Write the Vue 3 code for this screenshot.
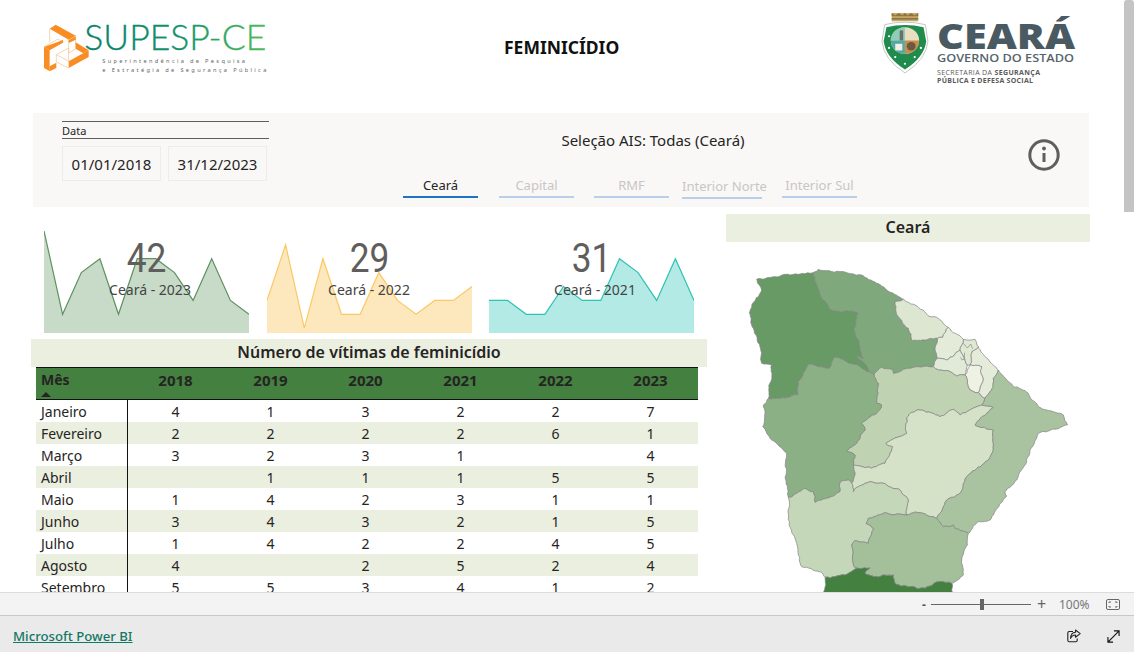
<script setup>
const years = [2018, 2019, 2020, 2021, 2022, 2023]

const rows = [
  ['Janeiro', 4, 1, 3, 2, 2, 7],
  ['Fevereiro', 2, 2, 2, 2, 6, 1],
  ['Março', 3, 2, 3, 1, '', 4],
  ['Abril', '', 1, 1, 1, 5, 5],
  ['Maio', 1, 4, 2, 3, 1, 1],
  ['Junho', 3, 4, 3, 2, 1, 5],
  ['Julho', 1, 4, 2, 2, 4, 5],
  ['Agosto', 4, '', 2, 5, 2, 4],
  ['Setembro', 5, 5, 3, 4, 1, 2]
]

const tabs = [
  { label: 'Ceará', active: true },
  { label: 'Capital' },
  { label: 'RMF' },
  { label: 'Interior Norte', low: true },
  { label: 'Interior Sul' }
]

// y = base - 13.9 por vítima, igual para os três gráficos
const toPoints = (values) => values.map((v, i) => `${(i * 205 / 11).toFixed(1)},${(98.2 - v * 13.9).toFixed(1)}`).join(' ')

const cards = [
  { total: 42, label: 'Ceará - 2023', line: '#5f9260', area: '#c8dac8', values: [7, 1, 4, 5, 1, 5, 5, 4, 2, 5, 2, 1] },
  { total: 29, label: 'Ceará - 2022', line: '#fbc864', area: '#fde8bd', values: [2, 6, 0, 5, 1, 1, 4, 2, 1, 2, 2, 3] },
  { total: 31, label: 'Ceará - 2021', line: '#2fc2b2', area: '#b3eae5', values: [2, 2, 1, 1, 3, 2, 2, 5, 4, 2, 5, 2] }
].map(c => ({
  ...c,
  linePoints: toPoints(c.values),
  areaPoints: `0,103 ${toPoints(c.values)} 205,103`
}))

// contorno irregular: cada aresta é subdividida de forma determinística,
// assim duas regiões vizinhas compartilham a mesma fronteira
const noise = (x, y) => {
  const s = Math.sin(x * 12.9898 + y * 78.233) * 43758.5453
  return s - Math.floor(s) - 0.5
}

const subdivide = (a, b) => {
  const dx = b[0] - a[0]
  const dy = b[1] - a[1]
  const len = Math.hypot(dx, dy)
  if (len < 9) return [a]
  const amp = noise(a[0] + b[0], a[1] + b[1]) * 0.28 * Math.min(len, 22) / len
  const mid = [(a[0] + b[0]) / 2 - dy * amp, (a[1] + b[1]) / 2 + dx * amp]
  return [...subdivide(a, mid), ...subdivide(mid, b)]
}

const edge = (a, b) => {
  const swap = a[0] > b[0] || (a[0] === b[0] && a[1] > b[1])
  if (!swap) return subdivide(a, b)
  const pts = [...subdivide(b, a), a]
  pts.reverse()
  return pts.slice(0, -1)
}

const toPath = (pts) => {
  let out = []
  pts.forEach((p, i) => { out = out.concat(edge(p, pts[(i + 1) % pts.length])) })
  return 'M' + out.map(p => `${p[0].toFixed(1)} ${p[1].toFixed(1)}`).join('L') + 'Z'
}

const regions = [
  ['#689a65', [[80,88],[180,75],[250,68],[268,125],[300,178],[385,188],[372,238],[390,290],[400,325],[380,315],[418,365],[360,340],[315,322],[298,355],[235,342],[205,395],[203,435],[115,445],[125,345],[95,340],[90,290],[70,235],[58,188],[95,120]]],
  ['#7fa97c', [[250,68],[265,58],[330,65],[395,75],[440,100],[520,148],[495,155],[498,185],[535,235],[548,272],[622,265],[615,295],[622,325],[610,350],[540,355],[490,370],[485,358],[455,352],[432,372],[418,365],[380,315],[400,325],[390,290],[372,238],[385,188],[300,178],[268,125]]],
  ['#dde6d0', [[520,148],[555,165],[600,200],[625,205],[655,232],[638,262],[622,265],[548,272],[535,235],[498,185],[495,155]]],
  ['#e4ecd9', [[655,232],[700,268],[690,300],[650,330],[622,325],[615,295],[622,265],[638,262]]],
  ['#e4ecd9', [[745,290],[805,360],[790,385],[785,420],[765,445],[745,428],[758,395],[755,350],[720,345],[725,305]]],
  ['#e1ead6', [[622,325],[650,330],[690,300],[700,318],[712,345],[705,375],[680,378],[660,365],[625,360],[610,350]]],
  ['#eef2e5', [[720,345],[755,350],[758,395],[745,428],[720,420],[705,375]]],
  ['#dfe8d3', [[700,268],[735,268],[745,290],[725,305],[720,345],[712,345],[700,318],[690,300]]],
  ['#bfd3b2', [[432,372],[455,352],[485,358],[490,370],[540,355],[610,350],[625,360],[660,365],[680,378],[705,375],[720,420],[745,428],[765,445],[755,465],[690,495],[670,478],[630,500],[575,480],[540,490],[530,505],[530,550],[468,580],[488,590],[465,640],[425,655],[370,645],[375,615],[350,603],[380,580],[405,540],[395,520],[440,490],[455,465],[440,460],[445,400]]],
  ['#8bb085', [[115,445],[203,435],[205,395],[235,342],[298,355],[315,322],[360,340],[418,365],[432,372],[445,400],[440,460],[455,465],[440,490],[395,520],[405,540],[380,580],[350,603],[375,615],[370,645],[375,675],[365,700],[355,690],[332,695],[330,725],[290,745],[255,757],[250,725],[225,715],[175,742],[168,700],[170,610],[125,570],[98,530],[105,490],[100,465]]],
  ['#d5e2c8', [[530,505],[540,490],[575,480],[630,500],[670,478],[690,495],[755,465],[790,472],[735,525],[790,540],[790,600],[775,630],[715,675],[690,730],[650,750],[620,805],[610,800],[570,788],[530,795],[535,750],[510,720],[470,705],[420,695],[385,710],[370,725],[365,700],[375,675],[370,645],[425,655],[465,640],[488,590],[468,580],[530,550]]],
  ['#a9c3a0', [[805,360],[850,410],[895,430],[925,470],[950,480],[1000,495],[1012,525],[925,550],[890,635],[860,690],[825,725],[830,738],[780,810],[745,815],[715,850],[675,835],[670,825],[640,830],[620,805],[650,750],[690,730],[715,675],[775,630],[790,600],[790,540],[735,525],[790,472],[755,465],[765,445],[785,420],[790,385]]],
  ['#c5d7b9', [[175,742],[225,715],[250,725],[255,757],[290,745],[330,725],[332,695],[355,690],[365,700],[370,725],[385,710],[420,695],[470,705],[510,720],[535,750],[530,795],[460,790],[415,805],[408,820],[430,835],[415,880],[375,872],[365,885],[372,950],[385,955],[345,975],[285,982],[270,965],[215,950],[200,880],[185,840],[175,805]]],
  ['#a3c09a', [[415,805],[460,790],[530,795],[570,788],[610,800],[620,805],[640,830],[670,825],[675,835],[715,850],[712,885],[695,930],[700,975],[665,1000],[625,995],[585,1015],[535,1010],[495,1000],[490,975],[440,980],[405,970],[385,955],[372,950],[365,885],[375,872],[415,880],[430,835],[408,820]]],
  ['#44803f', [[385,955],[420,953],[405,970],[440,980],[490,975],[495,1000],[535,1010],[585,1015],[625,995],[665,1000],[670,1040],[283,1040],[285,982],[345,975]]]
].map(([fill, pts]) => ({ fill, d: toPath(pts) }))
</script>

<template>
  <div class="page">
    <div class="viewer">
      <div class="report">
        <header class="top">
          <svg class="logo-supesp" viewBox="130 70 690 150">
            <defs>
              <linearGradient id="supespGrad" gradientUnits="userSpaceOnUse" x1="255" y1="0" x2="800" y2="0">
                <stop offset="0" stop-color="#0b7f6c" />
                <stop offset="0.5" stop-color="#12906a" />
                <stop offset="1" stop-color="#4fbb5c" />
              </linearGradient>
            </defs>
            <g fill="none" stroke="#f9c99a" stroke-width="2.4">
              <path d="M133 142l42-24 17 10" />
              <path d="M207 120l21-12v40l-21 12zM170 165l37-20v40l-37-20zM170 165v22l37 18M150 87v40" />
            </g>
            <g fill="#f98d23">
              <path d="M150 87l18-12 60 33-21 12z" />
              <path d="M133 142l17 10v63l-17-10z" />
              <path d="M150 152l40-23v-8l-57 21z" />
              <path d="M207 185l60-33v20l-60 33z" />
              <path d="M228 128l39 24-16 9-23-14z" />
              <path d="M150 200l20-11v16l-20 10z" />
              <path d="M207 122l21-12v10l-21 10z" />
            </g>
            <text class="supesp-name" x="254" y="152" textLength="546" lengthAdjust="spacingAndGlyphs" fill="url(#supespGrad)" stroke="url(#supespGrad)">SUPESP-CE</text>
            <text class="supesp-sub" x="308" y="190" textLength="428">Superintendência de Pesquisa</text>
            <text class="supesp-sub" x="308" y="216" textLength="492">e Estratégia de Segurança Pública</text>
          </svg>
          <h1 class="page-title">FEMINICÍDIO</h1>
          <svg class="logo-ceara" viewBox="0 0 200 78">
            <g transform="translate(0.3,-3.2) scale(0.885,0.833)">
              <path d="M14 5h30v10H14z" fill="#c9a866" />
              <path d="M14 5l4 3 4-3 4 3 3-3 3 3 4-3 4 3 4-3v4H14z" fill="#8d7443" />
              <path d="M14 11h30v2H14z" fill="#8d7443" />
              <path d="M6 19q23-6 46 0l3 20q-2 22-26 38Q5 61 3 39z" fill="#fff" stroke="#b9c0bb" stroke-width="1" />
              <path d="M8 22q21-5 42 0l3 17q-2 19-24 34Q7 58 5 39z" fill="#1f8b4c" />
              <circle cx="29" cy="38" r="16" fill="#e7dfc0" />
              <path d="M13 38a16 16 0 0 1 16-16v16z" fill="#8fcdb9" />
              <path d="M29 38h16a16 16 0 0 1-16 16z" fill="#c98d4f" />
              <path d="M13 38h16v16a16 16 0 0 1-16-16z" fill="#53a9a6" />
              <path d="M23 26h4v12h-4z" fill="#6c6f66" />
              <circle cx="36" cy="45" r="5" fill="#6d5a3e" />
              <path d="M18 42h8v8h-8z" fill="#f1efe6" />
              <g fill="#fff">
                <circle cx="11" cy="33" r="1.3" /><circle cx="11" cy="47" r="1.3" /><circle cx="18" cy="58" r="1.3" />
                <circle cx="29" cy="66" r="1.3" /><circle cx="40" cy="58" r="1.3" /><circle cx="47" cy="47" r="1.3" />
              </g>
            </g>
            <text class="ceara-name" x="58" y="37" textLength="138" lengthAdjust="spacingAndGlyphs">CEARÁ</text>
            <text class="ceara-gov" x="58" y="50" textLength="137" lengthAdjust="spacingAndGlyphs">GOVERNO DO ESTADO</text>
            <text class="ceara-sec" x="58" y="63" textLength="103">SECRETARIA DA <tspan font-weight="700">SEGURANÇA</tspan></text>
            <text class="ceara-sec bold" x="58" y="71" textLength="96">PÚBLICA E DEFESA SOCIAL</text>
          </svg>
        </header>

        <section class="filters">
          <div class="date-slicer">
            <div class="slicer-title">Data</div>
            <div class="date-boxes">
              <div class="date-box">01/01/2018</div>
              <div class="date-box">31/12/2023</div>
            </div>
          </div>
          <div class="selection">
            <div class="selection-label">Seleção AIS: Todas (Ceará)</div>
            <div class="tabs">
              <div v-for="tab in tabs" :key="tab.label" class="tab" :class="{ active: tab.active, low: tab.low }">{{ tab.label }}</div>
            </div>
          </div>
          <svg class="info-icon" width="32" height="32" viewBox="0 0 32 32" fill="none">
            <circle cx="16" cy="16" r="14.2" stroke="#605e5c" stroke-width="3" />
            <path d="M16 14v9" stroke="#605e5c" stroke-width="3" />
            <circle cx="16" cy="9.5" r="1.9" fill="#605e5c" />
          </svg>
        </section>

        <main class="content">
          <div class="left-col">
            <div class="cards">
              <div v-for="card in cards" :key="card.total" class="card">
                <svg width="205" height="103" viewBox="0 0 205 103">
                  <polygon :points="card.areaPoints" :fill="card.area" />
                  <polyline :points="card.linePoints" fill="none" :stroke="card.line" stroke-width="1.2" />
                </svg>
                <div class="card-text">
                  <div class="card-total">{{ card.total }}</div>
                  <div class="card-label">{{ card.label }}</div>
                </div>
              </div>
            </div>
            <div class="section-title">Número de vítimas de feminicídio</div>
            <div class="table">
              <div class="thead">
                <div class="month-head">Mês<span class="sort-arrow"></span></div>
                <div v-for="year in years" :key="year" class="year-head">{{ year }}</div>
              </div>
              <div v-for="row in rows" :key="row[0]" class="tr">
                <div class="month">{{ row[0] }}</div>
                <div v-for="(cell, i) in row.slice(1)" :key="i" class="td">{{ cell }}</div>
              </div>
            </div>
          </div>
          <div class="right-col">
            <div class="section-title">Ceará</div>
            <svg class="map" width="350" height="347" viewBox="0 0 1050 1041">
              <path v-for="(region, i) in regions" :key="i" :d="region.d" :fill="region.fill" stroke="#858585" stroke-width="2.2" stroke-linejoin="round" />
              <path d="M700 280l12 14 10-12 6 14M692 322q2 12 10 6l2-20" fill="none" stroke="#858585" stroke-width="2" />
            </svg>
          </div>
        </main>
      </div>
      <div class="scrollbar"><div class="thumb"></div></div>
    </div>

    <div class="zoom-bar">
      <span class="zoom-minus">-</span>
      <div class="zoom-track"><span class="zoom-thumb"></span></div>
      <span class="zoom-plus">+</span>
      <span class="zoom-value">100%</span>
      <svg class="fit-icon" width="14" height="11" viewBox="0 0 14 11" fill="none" stroke="#666" stroke-width="1">
        <rect x="0.5" y="0.5" width="13" height="10" rx="1.5" />
        <path d="M3 4V3h2M11 4V3H9M3 7v1h2M11 7v1H9" />
      </svg>
    </div>

    <footer class="footer">
      <a class="pbi-link">Microsoft Power BI</a>
      <div class="footer-icons">
        <svg width="14" height="14" viewBox="0 0 14 14" fill="none" stroke="#222" stroke-width="1.1">
          <path d="M6 2.5H2.2a1.4 1.4 0 0 0-1.4 1.4v7.4a1.4 1.4 0 0 0 1.4 1.4h6.6a1.4 1.4 0 0 0 1.4-1.4V9.5" />
          <path d="M8.5 1l4.7 3.6-4.7 3.6V6Q5 6 3.6 9.4 3.8 3.5 8.5 3.2z" stroke-linejoin="round" />
        </svg>
        <svg width="13" height="13" viewBox="0 0 14 14" fill="none" stroke="#111" stroke-width="1.2">
          <path d="M1 13L13 1M7.5 1H13v5.5M1 7.5V13h5.5" />
        </svg>
      </div>
    </footer>
  </div>
</template>

<style>
html, body {
  margin: 0;
  background: #fff;
}
</style>

<style scoped>
.page {
  width: 1134px;
  height: 652px;
  display: flex;
  flex-direction: column;
  overflow: hidden;
  font-family: "Noto Sans", "Open Sans", sans-serif;
  color: #252423;
}

.viewer {
  height: 592px;
  display: flex;
  overflow: hidden;
}

.report {
  width: 1124px;
  overflow: hidden;
}

.scrollbar {
  width: 10px;
  background: #fff;
}

.thumb {
  height: 212px;
  background: #c4c4c4;
  border-radius: 3px 3px 0 0;
}

.top {
  height: 113px;
  display: grid;
  grid-template-columns: 460px 120px 1fr;
  box-sizing: border-box;
  padding-left: 43px;
}

.logo-supesp {
  width: 230px;
  height: 50px;
  margin-top: 23px;
}

.supesp-name {
  font-family: Lato, sans-serif;
  font-weight: 300;
  font-size: 108px;
  stroke-width: 1;
}

.supesp-sub {
  font-family: "Noto Sans", sans-serif;
  font-size: 17px;
  fill: #666;
}

.page-title {
  margin: 36px 0 0 0;
  padding-left: 1px;
  font-size: 17.5px;
  line-height: 22px;
  font-weight: 700;
  white-space: nowrap;
  color: #111;
}

.logo-ceara {
  width: 200px;
  height: 78px;
  margin: 12px 0 0 256px;
  overflow: visible;
}

.ceara-name {
  font-family: "Open Sans", sans-serif;
  font-weight: 800;
  font-size: 35px;
  fill: #4a5a63;
}

.ceara-gov {
  font-family: "Open Sans", sans-serif;
  font-weight: 600;
  font-size: 11.5px;
  fill: #55646c;
}

.ceara-sec {
  font-family: "Open Sans", sans-serif;
  font-size: 7px;
  fill: #5a5a5a;
}

.ceara-sec.bold {
  font-weight: 700;
}

.filters {
  margin-left: 33px;
  width: 1056px;
  height: 94px;
  background: #f9f8f7;
  display: flex;
  box-sizing: border-box;
  padding: 8px 29px 0 29px;
}

.date-slicer {
  width: 207px;
  flex-shrink: 0;
}

.slicer-title {
  height: 16px;
  border-top: 1px solid #605e5c;
  border-bottom: 1px solid #605e5c;
  font-size: 11px;
  line-height: 17px;
  color: #252423;
}

.date-boxes {
  display: flex;
  gap: 7px;
  margin-top: 7px;
}

.date-box {
  width: 99px;
  height: 35px;
  box-sizing: border-box;
  border: 1px solid #ececec;
  font-size: 15px;
  line-height: 35px;
  text-align: center;
}

.selection {
  width: 759px;
  padding-left: 134px;
  box-sizing: border-box;
  flex-shrink: 0;
}

.selection-label {
  width: 500px;
  margin: 7px 0 0 0;
  font-size: 15px;
  line-height: 24px;
  text-align: center;
}

.tabs {
  display: flex;
  margin-top: 22px;
  gap: 20px;
}

.tab {
  width: 75px;
  height: 24px;
  box-sizing: border-box;
  border-bottom: 2px solid #b7cfe9;
  font-size: 13px;
  line-height: 22px;
  text-align: center;
  white-space: nowrap;
  color: #c8c6c4;
}

.tab:nth-child(2) {
  margin-left: 1px;
}

.tab.active {
  border-bottom-color: #1f73c4;
  color: #252423;
}

.tab.low {
  width: 80px;
  height: 25px;
  margin-left: -7px;
  line-height: 24px;
}

.info-icon {
  margin: 18px 0 0 0;
  flex-shrink: 0;
}

.content {
  margin: 7px 0 0 31px;
  display: flex;
  gap: 19px;
}

.left-col {
  width: 676px;
  padding-top: 16px;
  flex-shrink: 0;
}

.cards {
  display: flex;
  gap: 17.5px;
  padding-left: 13px;
  height: 103px;
  margin-bottom: 6px;
}

.card {
  position: relative;
  width: 205px;
  height: 103px;
}

.card svg {
  display: block;
}

.card-text {
  position: absolute;
  inset: 0;
  text-align: center;
}

.card-total {
  margin-top: 7px;
  font-family: Roboto, sans-serif;
  font-size: 41px;
  font-weight: 400;
  line-height: 42px;
  color: #605e5c;
  transform: scaleX(0.86);
}

.card-label {
  margin-top: 1px;
  font-size: 14px;
  line-height: 20px;
  color: #444;
}

.card:nth-child(odd) .card-label {
  padding-left: 7px;
}

.section-title {
  height: 28px;
  background: #ebefdf;
  font-size: 16px;
  line-height: 27px;
  font-weight: 600;
  text-align: center;
}

.table {
  width: 662px;
  margin-left: 5px;
}

.thead {
  display: grid;
  grid-template-columns: 92px repeat(6, 95px);
  height: 33px;
  box-sizing: border-box;
  background: #44803f;
  border-top: 1px solid #111;
  border-bottom: 1px solid #111;
  font-size: 15px;
  font-weight: 700;
  line-height: 24px;
  color: #252423;
}

.month-head {
  position: relative;
  padding-left: 5px;
  font-size: 14px;
}

.sort-arrow {
  position: absolute;
  left: 5px;
  top: 24px;
  width: 0;
  height: 0;
  border-left: 5px solid transparent;
  border-right: 5px solid transparent;
  border-bottom: 5px solid #252423;
}

.year-head {
  text-align: center;
}

.tr {
  display: grid;
  grid-template-columns: 92px repeat(6, 95px);
  height: 22px;
  font-size: 14px;
  line-height: 23px;
}

.tr:nth-child(odd) {
  background: #ebefdf;
}

.month {
  padding-left: 5px;
  border-right: 1px solid #111;
  width: 86px;
}

.td {
  text-align: center;
}

.right-col {
  width: 364px;
}

.map {
  display: block;
  margin: 8px 0 0 4px;
}

.zoom-bar {
  height: 24px;
  box-sizing: border-box;
  background: #f3f3f3;
  border-top: 1px solid #dcdcdc;
  border-bottom: 1px solid #c8c8c8;
  display: flex;
  align-items: center;
  justify-content: flex-end;
  padding-right: 14px;
  font-size: 12px;
  color: #777;
}

.zoom-minus {
  width: 9px;
  font-weight: 700;
  color: #555;
}

.zoom-track {
  position: relative;
  width: 100px;
  height: 1px;
  background: #666;
}

.zoom-thumb {
  position: absolute;
  left: 49px;
  top: -5px;
  width: 4px;
  height: 11px;
  background: #666;
}

.zoom-plus {
  width: 28px;
  padding-left: 6px;
  box-sizing: border-box;
  font-size: 16px;
  color: #666;
}

.zoom-value {
  width: 47px;
  color: #777;
}

.fit-icon {
  display: block;
}

.footer {
  flex: 1;
  background: #eaeaea;
  display: flex;
  align-items: center;
  justify-content: space-between;
  padding: 4px 14px 0 13px;
}

.pbi-link {
  font-size: 13.2px;
  font-weight: 500;
  color: #117865;
  text-decoration: underline;
}

.footer-icons {
  display: flex;
  gap: 26px;
  align-items: center;
}

.footer-icons svg {
  display: block;
}
</style>
